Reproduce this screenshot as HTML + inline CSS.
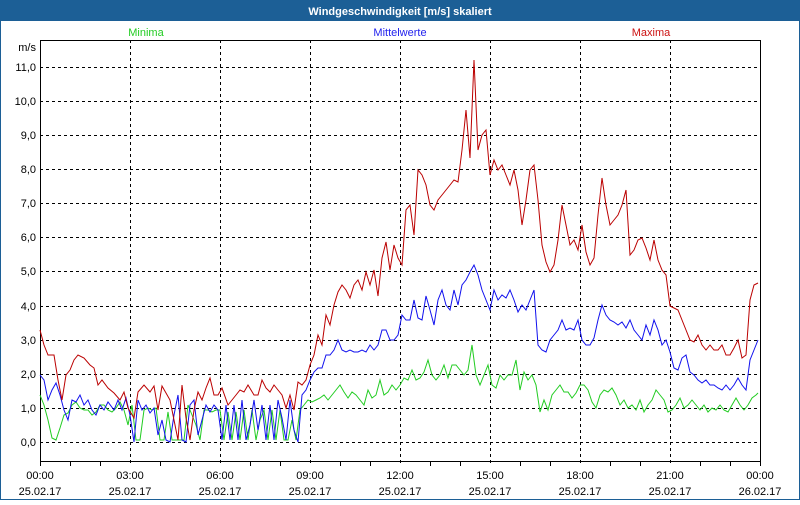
<!DOCTYPE html>
<html><head><meta charset="utf-8"><style>
body{margin:0;width:800px;height:500px;overflow:hidden;background:#fff;font-family:"Liberation Sans",sans-serif}
</style></head><body>
<svg width="800" height="500" xmlns="http://www.w3.org/2000/svg" font-family="Liberation Sans, sans-serif" font-size="11">
<rect x="0" y="0" width="800" height="500" fill="#fff"/>
<rect x="0" y="0" width="800" height="21" fill="#1c5f96"/>
<rect x="0" y="0" width="1" height="500" fill="#1c5f96"/>
<rect x="799" y="0" width="1" height="500" fill="#1c5f96"/>
<rect x="0" y="499" width="800" height="1" fill="#1c5f96"/>
<text x="400" y="15" fill="#fff" font-weight="bold" text-anchor="middle">Windgeschwindigkeit [m/s] skaliert</text>
<text x="146" y="36" fill="#22cc22" text-anchor="middle">Minima</text>
<text x="400" y="36" fill="#2222ee" text-anchor="middle">Mittelwerte</text>
<text x="651" y="36" fill="#cc1111" text-anchor="middle">Maxima</text>
<text x="36" y="51" text-anchor="end" fill="#000">m/s</text>
<g stroke="#000" stroke-dasharray="3,3" stroke-width="1">
<line x1="40" y1="442.5" x2="760" y2="442.5"/><line x1="40" y1="408.5" x2="760" y2="408.5"/><line x1="40" y1="374.5" x2="760" y2="374.5"/><line x1="40" y1="340.5" x2="760" y2="340.5"/><line x1="40" y1="306.5" x2="760" y2="306.5"/><line x1="40" y1="271.5" x2="760" y2="271.5"/><line x1="40" y1="237.5" x2="760" y2="237.5"/><line x1="40" y1="203.5" x2="760" y2="203.5"/><line x1="40" y1="169.5" x2="760" y2="169.5"/><line x1="40" y1="135.5" x2="760" y2="135.5"/><line x1="40" y1="101.5" x2="760" y2="101.5"/><line x1="40" y1="67.5" x2="760" y2="67.5"/>
<line x1="130.5" y1="40" x2="130.5" y2="466"/><line x1="220.5" y1="40" x2="220.5" y2="466"/><line x1="310.5" y1="40" x2="310.5" y2="466"/><line x1="400.5" y1="40" x2="400.5" y2="466"/><line x1="490.5" y1="40" x2="490.5" y2="466"/><line x1="580.5" y1="40" x2="580.5" y2="466"/><line x1="670.5" y1="40" x2="670.5" y2="466"/>
</g>
<g fill="#000" text-anchor="end">
<text x="36" y="446">0,0</text><text x="36" y="412">1,0</text><text x="36" y="378">2,0</text><text x="36" y="344">3,0</text><text x="36" y="310">4,0</text><text x="36" y="275">5,0</text><text x="36" y="241">6,0</text><text x="36" y="207">7,0</text><text x="36" y="173">8,0</text><text x="36" y="139">9,0</text><text x="36" y="105">10,0</text><text x="36" y="71">11,0</text>
</g>
<g fill="#000" text-anchor="middle">
<text x="40" y="479">00:00</text><text x="40" y="495">25.02.17</text>
<text x="130" y="479">03:00</text><text x="130" y="495">25.02.17</text>
<text x="220" y="479">06:00</text><text x="220" y="495">25.02.17</text>
<text x="310" y="479">09:00</text><text x="310" y="495">25.02.17</text>
<text x="400" y="479">12:00</text><text x="400" y="495">25.02.17</text>
<text x="490" y="479">15:00</text><text x="490" y="495">25.02.17</text>
<text x="580" y="479">18:00</text><text x="580" y="495">25.02.17</text>
<text x="670" y="479">21:00</text><text x="670" y="495">25.02.17</text>
<text x="760" y="479">00:00</text><text x="760" y="495">26.02.17</text>
</g>
<g stroke="#000" stroke-width="1">
<line x1="70.5" y1="461" x2="70.5" y2="466"/><line x1="100.5" y1="461" x2="100.5" y2="466"/><line x1="160.5" y1="461" x2="160.5" y2="466"/><line x1="190.5" y1="461" x2="190.5" y2="466"/><line x1="250.5" y1="461" x2="250.5" y2="466"/><line x1="280.5" y1="461" x2="280.5" y2="466"/><line x1="340.5" y1="461" x2="340.5" y2="466"/><line x1="370.5" y1="461" x2="370.5" y2="466"/><line x1="430.5" y1="461" x2="430.5" y2="466"/><line x1="460.5" y1="461" x2="460.5" y2="466"/><line x1="520.5" y1="461" x2="520.5" y2="466"/><line x1="550.5" y1="461" x2="550.5" y2="466"/><line x1="610.5" y1="461" x2="610.5" y2="466"/><line x1="640.5" y1="461" x2="640.5" y2="466"/><line x1="700.5" y1="461" x2="700.5" y2="466"/><line x1="730.5" y1="461" x2="730.5" y2="466"/><line x1="40.5" y1="461" x2="40.5" y2="466"/><line x1="760.5" y1="461" x2="760.5" y2="466"/>
</g>
<rect x="40.5" y="40.5" width="720" height="421" fill="none" stroke="#000" stroke-width="1"/>
<polyline fill="none" stroke="#22cc22" stroke-width="1" points="40,395 44,405 48,420 52,438 56,440 60,428 64,415 68,413 72,405 76,402 80,408 84,410 88,410 92,415 96,412 100,405 104,405 108,410 112,412 116,408 120,402 124,410 128,425 132,405 136,440 140,440 144,410 148,408 152,410 156,408 160,440 164,440 168,412 172,440 176,440 180,440 184,440 188,405 192,415 196,425 200,440 204,410 208,410 212,412 216,410 220,410 224,440 228,412 232,440 236,412 240,440 244,410 248,440 252,410 256,440 260,420 264,410 268,440 272,410 276,440 280,410 284,440 288,440 292,420 296,440 300,410 304,405 308,400 312,402 316,400 320,398 324,395 328,400 332,395 336,390 340,385 344,392 348,398 352,392 356,395 360,400 364,405 368,390 372,398 376,395 380,380 384,395 388,392 392,385 396,390 400,385 404,378 408,380 412,370 416,380 420,378 424,372 428,360 432,375 436,380 440,375 444,365 448,378 452,365 456,365 460,370 464,375 468,370 472,345 476,375 480,385 484,375 488,365 492,385 496,388 500,375 504,380 508,375 512,375 516,360 520,390 524,372 528,380 532,375 536,385 540,412 544,400 548,410 552,395 556,390 560,385 564,392 568,392 572,398 576,393 580,385 584,385 588,390 592,402 596,408 600,395 604,390 608,392 612,388 616,395 620,405 624,400 628,408 632,405 636,410 640,400 644,412 648,405 652,400 656,390 660,395 664,400 668,412 672,410 676,405 680,398 684,408 688,405 692,400 696,405 700,410 704,405 708,412 712,408 716,410 720,405 724,410 728,412 732,405 736,398 740,405 744,410 748,405 752,398 756,395 758,393"/>
<polyline fill="none" stroke="#1111ee" stroke-width="1" points="40,375 44,380 48,400 52,390 56,383 60,395 64,410 68,420 72,400 76,402 80,395 84,405 88,400 92,410 96,415 100,405 104,410 108,402 114,410 118,400 122,410 126,398 130,415 134,442 138,400 142,410 146,405 150,413 154,408 158,435 162,420 166,440 170,442 174,415 178,395 182,440 186,442 190,405 194,400 198,435 202,420 206,405 210,412 214,405 218,410 222,440 226,405 230,440 234,405 238,440 242,400 246,440 250,425 254,400 258,430 262,405 266,440 270,405 274,440 278,400 282,418 286,440 290,400 294,430 298,442 302,395 306,390 310,380 314,372 318,368 322,368 326,355 330,355 334,350 338,340 342,350 346,352 350,350 354,352 358,352 362,350 366,352 370,345 374,350 378,345 382,330 386,330 390,340 394,340 398,335 402,315 406,320 410,320 414,300 418,318 422,320 426,296 430,310 434,325 438,300 442,290 446,305 450,310 454,290 458,305 462,285 466,280 470,272 474,265 478,275 482,290 486,300 490,310 494,290 498,300 502,295 506,298 510,290 514,300 518,312 522,305 526,310 530,300 534,290 538,345 542,350 546,352 550,340 554,335 558,330 562,320 566,330 570,328 574,330 578,320 582,340 586,345 590,345 594,338 598,320 602,305 606,315 610,320 614,322 618,325 622,322 626,328 630,320 634,330 638,335 642,340 646,325 650,335 654,320 658,330 662,345 666,340 670,352 674,368 678,370 682,358 686,355 690,372 694,375 698,380 702,383 706,380 710,385 714,385 718,388 722,390 726,385 730,390 734,385 738,378 742,385 746,390 750,360 754,350 758,340"/>
<polyline fill="none" stroke="#bb0000" stroke-width="1" points="40,330 44,345 48,355 54,355 58,380 62,400 66,375 70,370 74,360 78,355 84,358 90,365 94,368 98,385 102,380 108,388 114,393 120,400 124,392 128,408 134,418 138,392 144,385 150,392 154,386 158,410 162,386 166,393 170,400 174,420 178,440 182,385 186,418 190,440 194,410 198,392 202,400 206,388 210,378 214,395 218,395 222,388 228,405 232,400 236,395 240,390 244,392 248,385 254,395 258,395 262,380 266,388 270,392 274,385 278,390 282,395 286,408 290,395 294,410 298,382 302,385 306,380 310,365 314,355 318,335 322,345 326,315 330,325 334,305 338,292 342,285 346,290 350,298 354,285 358,280 362,290 366,272 370,285 374,270 378,296 382,258 386,242 390,270 394,245 398,258 402,265 406,210 410,205 414,235 418,170 422,175 426,185 430,205 434,210 438,200 442,195 446,190 450,185 454,180 458,182 462,150 466,110 470,158 474,60 478,150 482,135 486,130 490,175 494,160 498,170 502,165 506,175 510,185 514,170 518,190 522,225 526,200 530,170 534,165 538,200 542,245 546,262 550,272 554,265 558,240 562,205 566,225 570,245 574,240 578,250 582,225 586,252 590,265 594,258 598,215 602,178 606,205 610,225 614,220 618,215 622,205 626,190 630,255 634,250 638,240 642,238 646,248 650,260 654,240 658,260 662,270 666,275 670,306 674,308 678,310 682,320 686,330 690,340 694,342 698,335 702,345 706,350 710,345 714,350 718,350 722,345 726,355 730,355 734,348 738,340 742,358 746,355 750,300 754,285 758,283"/>
</svg>
</body></html>
